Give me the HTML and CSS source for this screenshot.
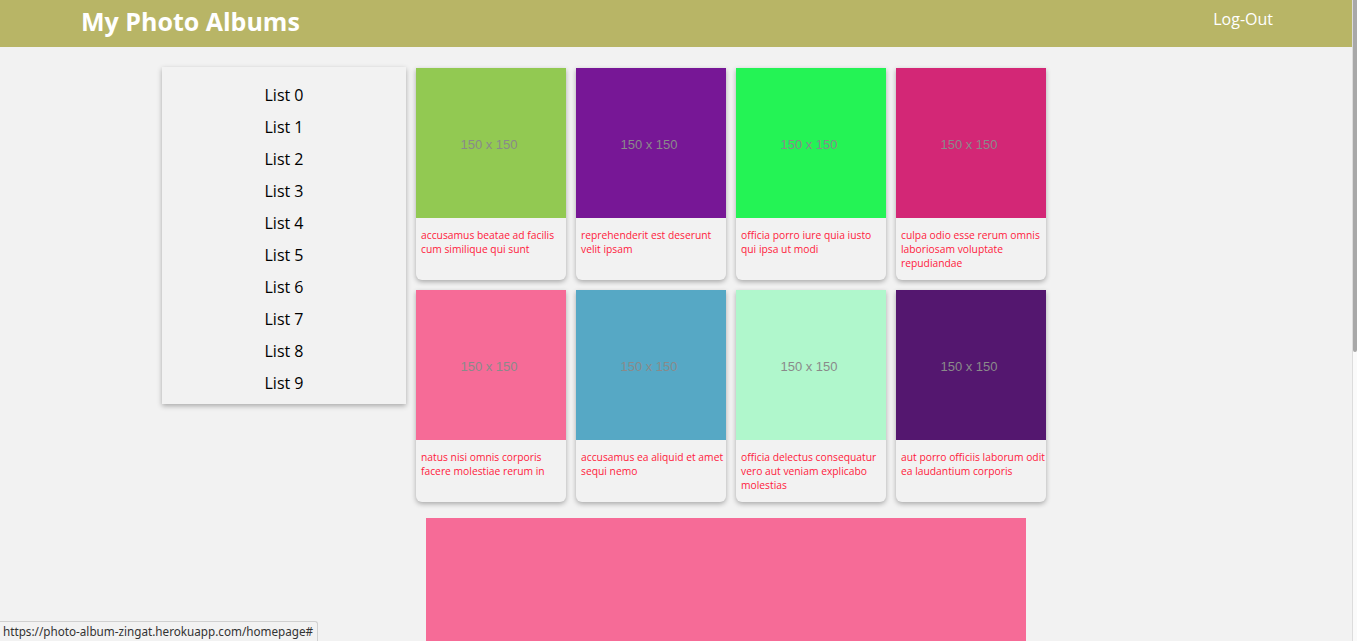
FILE: index.html
```html
<!DOCTYPE html>
<html lang="en">
<head>
<meta charset="utf-8">
<title>My Photo Albums</title>
<link rel="stylesheet" href="styles.css">
</head>
<body>
<header class="topbar">
  <h1 class="brand">My Photo Albums</h1>
  <a class="logout" href="#">Log-Out</a>
</header>
<main class="layout">
  <nav class="sidebar">
    <a href="#">List 0</a>
    <a href="#">List 1</a>
    <a href="#">List 2</a>
    <a href="#">List 3</a>
    <a href="#">List 4</a>
    <a href="#">List 5</a>
    <a href="#">List 6</a>
    <a href="#">List 7</a>
    <a href="#">List 8</a>
    <a href="#">List 9</a>
  </nav>
  <section class="content">
    <div class="gallery">
      <div class="card"><div class="thumb c1">150 x 150</div><p class="caption">accusamus beatae ad facilis cum similique qui sunt</p></div>
      <div class="card"><div class="thumb c2">150 x 150</div><p class="caption">reprehenderit est deserunt velit ipsam</p></div>
      <div class="card"><div class="thumb c3">150 x 150</div><p class="caption">officia porro iure quia iusto qui ipsa ut modi</p></div>
      <div class="card"><div class="thumb c4">150 x 150</div><p class="caption">culpa odio esse rerum omnis laboriosam voluptate repudiandae</p></div>
      <div class="card"><div class="thumb c5">150 x 150</div><p class="caption">natus nisi omnis corporis facere molestiae rerum in</p></div>
      <div class="card"><div class="thumb c6">150 x 150</div><p class="caption">accusamus ea aliquid et amet sequi nemo</p></div>
      <div class="card"><div class="thumb c7">150 x 150</div><p class="caption">officia delectus consequatur vero aut veniam explicabo molestias</p></div>
      <div class="card"><div class="thumb c8">150 x 150</div><p class="caption">aut porro officiis laborum odit ea laudantium corporis</p></div>
    </div>
    <div class="big-photo"></div>
  </section>
</main>
<div class="scrollbar"><div class="thumb-bar"></div></div>
<div class="status">https://photo-album-zingat.herokuapp.com/homepage#</div>
</body>
</html>
```

FILE: styles.css
```css
html, body {
  margin: 0;
  padding: 0;
  overflow: hidden;
  height: 100%;
}
body {
  background: #f2f2f2;
  font-family: "Open Sans", "Noto Sans", sans-serif;
}
.topbar {
  height: 47px;
  background: #b8b566;
  display: flex;
  align-items: flex-start;
  justify-content: space-between;
  padding: 0 84px 0 81px;
}
.brand {
  margin: 0;
  color: #fff;
  font-size: 25px;
  font-weight: 700;
  line-height: 42px;
}
.logout {
  color: #fff;
  text-decoration: none;
  font-size: 16px;
  line-height: 38px;
}
.layout {
  display: flex;
  align-items: flex-start;
  padding: 20px 0 0 162px;
}
.sidebar {
  width: 244px;
  background: #f2f2f2;
  box-shadow: 0 2px 5px rgba(0,0,0,0.3);
  display: flex;
  flex-direction: column;
  align-items: center;
  padding: 12px 0 5px;
}
.sidebar a {
  color: #000;
  text-decoration: none;
  font-size: 16px;
  line-height: 32px;
}
.content {
  margin-left: 10px;
  padding-top: 1px;
}
.gallery {
  display: grid;
  grid-template-columns: repeat(4, 150px);
  gap: 10px;
  width: 630px;
}
.card {
  height: 212px;
  background: #f2f2f2;
  border-radius: 0 0 6px 6px;
  box-shadow: 0 2px 5px rgba(0,0,0,0.3);
  overflow: hidden;
}
.thumb {
  width: 150px;
  height: 150px;
  display: flex;
  align-items: center;
  justify-content: center;
  padding: 3px 4px 0 0;
  box-sizing: border-box;
  font-family: "Liberation Sans", Arial, sans-serif;
  font-size: 13px;
  color: #8a8a8a;
}
.c1 { background: #92c952; }
.c2 { background: #771796; }
.c3 { background: #24f355; }
.c4 { background: #d32776; }
.c5 { background: #f66b97; }
.c6 { background: #56a8c5; }
.c7 { background: #b0f7cc; }
.c8 { background: #54176f; }
.caption {
  margin: 0;
  padding: 10px 0 0 5px;
  font-size: 10.3px;
  line-height: 14px;
  color: #ff1a3c;
}
.big-photo {
  width: 600px;
  height: 600px;
  margin: 16px 0 0 10px;
  background: #f66b97;
}
.scrollbar {
  position: fixed;
  top: 0;
  right: 0;
  width: 4px;
  height: 100%;
  background: #fafafa;
  border-left: 1px solid #dcdcdc;
}
.thumb-bar {
  height: 352px;
  background: #a8a8a8;
  border-radius: 0 0 2px 2px;
}
.status {
  position: fixed;
  left: 0;
  bottom: 0;
  padding: 2px 4px 3px 3px;
  background: #f2f2f2;
  border: 1px solid #d0d0d0;
  border-left: none;
  border-bottom: none;
  border-radius: 0 3px 0 0;
  font-family: "Noto Sans", "Open Sans", sans-serif;
  font-size: 11.7px;
  line-height: 14px;
  color: #333;
}
```
